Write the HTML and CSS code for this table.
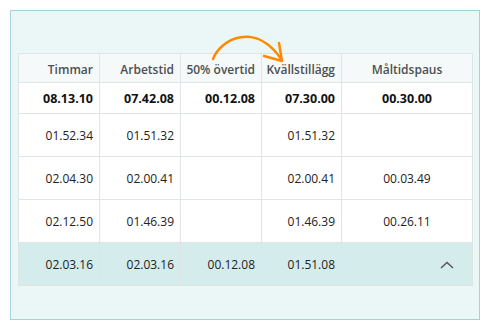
FILE: index.html
```html
<!DOCTYPE html>
<html>
<head>
<meta charset="utf-8">
<link rel="stylesheet" href="styles.css">
</head>
<body>
<div class="panel">
  <svg class="arrow" width="300" height="60" viewBox="0 0 300 60">
    <path d="M202 48 C 210 27, 245 11, 270 48" fill="none" stroke="#ff8a00" stroke-width="2.5" stroke-linecap="round"/>
    <path d="M253 45 L271 50 L268 32" fill="none" stroke="#ff8a00" stroke-width="2.5" stroke-linecap="round" stroke-linejoin="round"/>
  </svg>
  <table class="grid">
    <colgroup>
      <col class="c1"><col class="c2"><col class="c3"><col class="c4"><col class="c5">
    </colgroup>
    <thead>
      <tr class="head">
        <th>Timmar</th><th>Arbetstid</th><th>50% övertid</th><th>Kvällstillägg</th><th class="mid">Måltidspaus</th>
      </tr>
    </thead>
    <tbody>
      <tr class="sum">
        <td>08.13.10</td><td>07.42.08</td><td>00.12.08</td><td>07.30.00</td><td class="mid">00.30.00</td>
      </tr>
      <tr class="row">
        <td>01.52.34</td><td>01.51.32</td><td></td><td>01.51.32</td><td class="mid"></td>
      </tr>
      <tr class="row">
        <td>02.04.30</td><td>02.00.41</td><td></td><td>02.00.41</td><td class="mid">00.03.49</td>
      </tr>
      <tr class="row">
        <td>02.12.50</td><td>01.46.39</td><td></td><td>01.46.39</td><td class="mid">00.26.11</td>
      </tr>
      <tr class="row selected">
        <td>02.03.16</td><td>02.03.16</td><td>00.12.08</td><td>01.51.08</td>
        <td class="toggle"><svg class="chev" width="14" height="8" viewBox="0 0 14 8"><path d="M1 7 L7 1.5 L13 7" fill="none" stroke="#555" stroke-width="1.4"/></svg></td>
      </tr>
    </tbody>
  </table>
</div>
</body>
</html>
```
FILE: styles.css
```css
html, body {
  margin: 0;
  padding: 0;
  background: #ffffff;
}
body {
  padding: 10px;
  font-family: "Open Sans", "Noto Sans", sans-serif;
  font-size: 12px;
  color: #222;
}
.panel {
  position: relative;
  box-sizing: border-box;
  width: 470px;
  height: 310px;
  border: 1px solid #a6d3d7;
  background: #ebf7f7;
  padding: 42px 0 0 7px;
}
.arrow {
  position: absolute;
  left: 0;
  top: 0;
}
.grid {
  border-collapse: collapse;
  table-layout: fixed;
  width: 454px;
  background: #ffffff;
}
.c1, .c2, .c3 { width: 81px; }
.c4 { width: 80px; }
.c5 { width: 131px; }
.grid th, .grid td {
  border: 1px solid #dfe4e5;
  padding: 0 6px 0 0;
  text-align: right;
  white-space: nowrap;
  overflow: hidden;
}
.grid .mid {
  text-align: center;
  padding: 0;
}
.head th {
  background: #f5f9fa;
  color: #4b5052;
  font-weight: 600;
  padding-top: 3px;
  padding-bottom: 0;
  height: 25px;
}
.head th.mid { padding-top: 3px; }
.sum td {
  height: 30px;
  font-weight: 700;
  color: #111;
  font-size: 12.5px;
}
.row td {
  height: 42px;
  color: #222;
}
.selected td {
  background: #d5ecec;
}
.grid .toggle {
  text-align: right;
  padding-right: 18px;
}
.chev {
  display: inline-block;
  vertical-align: middle;
}
```
